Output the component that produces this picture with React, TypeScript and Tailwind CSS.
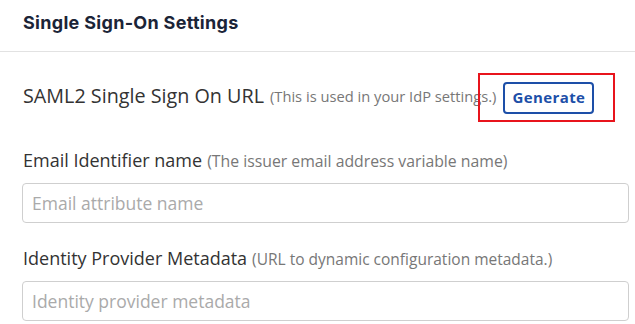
export default function App() {
  return (
    <div className="h-[324px] w-[635px] overflow-hidden bg-white font-['Open_Sans',sans-serif] text-[#333]">
      <div className="flex h-[52px] items-center border-b border-[#e2e2e2] px-[23px] pb-[6px]">
        <h2 className="font-['Inter',sans-serif] text-[18px] font-bold tracking-[0.3px] text-[#1b2437]">
          Single Sign-On Settings
        </h2>
      </div>

      <div className="flex flex-col px-[22px] pt-[21px]">
        <div className="flex h-[49px] items-center whitespace-nowrap">
          <span className="shrink-0 pl-px pb-[4px] text-[19.75px] text-[#333]">SAML2 Single Sign On URL</span>
          <span className="ml-[6px] shrink-0 pb-[2px] text-[14.7px] text-[#777]">(This is used in your IdP settings.)</span>
          <div className="-ml-[18px] flex h-[49px] w-[137px] shrink-0 items-center justify-center border-2 border-[#e8141c]">
            <button
              type="button"
              className="ml-[4px] h-[32px] w-[91px] rounded-[4px] border-2 border-[#1d4fa8] bg-white text-[15px] font-bold tracking-[0.4px] text-[#1d4fa8]"
            >
              Generate
            </button>
          </div>
        </div>

        <label className="mt-[24px] block whitespace-nowrap pl-px leading-[28px]">
          <span className="text-[18px] text-[#333]">Email Identifier name</span>
          <span className="ml-[5px] text-[15.8px] text-[#777]">(The issuer email address variable name)</span>
        </label>
        <input
          type="text"
          placeholder="Email attribute name"
          className="mt-[8px] h-[40px] w-[607px] rounded-[4px] border border-[#cfcfcf] px-[9px] text-[17.5px] placeholder:text-[#aaa]"
        />

        <label className="mt-[21px] block whitespace-nowrap pl-px leading-[28px]">
          <span className="text-[18px] text-[#333]">Identity Provider Metadata</span>
          <span className="ml-[5px] text-[15.5px] text-[#777]">(URL to dynamic configuration metadata.)</span>
        </label>
        <input
          type="text"
          placeholder="Identity provider metadata"
          className="mt-[8px] h-[40px] w-[607px] rounded-[4px] border border-[#cfcfcf] px-[9px] text-[17.5px] placeholder:text-[#aaa]"
        />
      </div>
    </div>
  );
}
